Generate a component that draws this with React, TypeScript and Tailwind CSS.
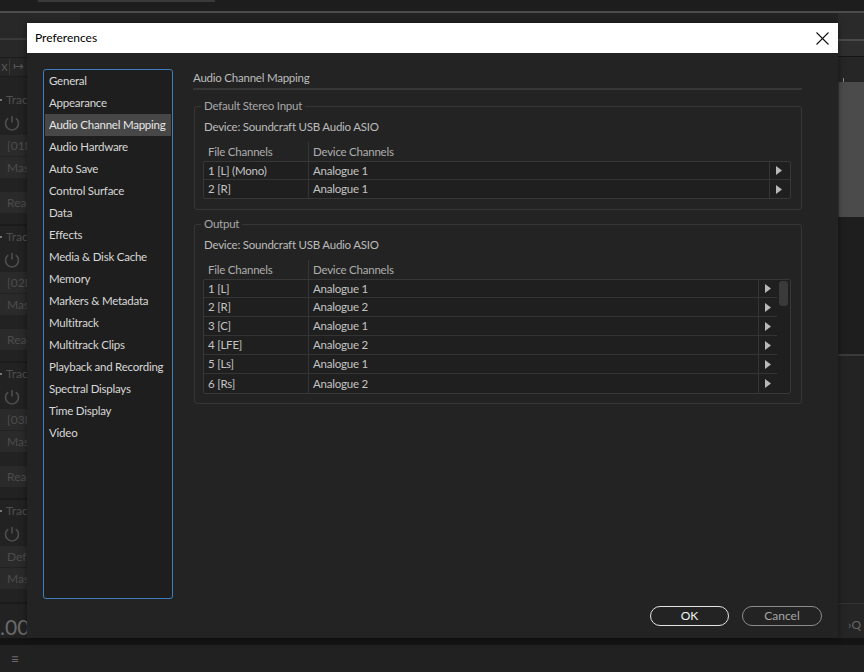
import React from "react";

const navItems = [
  "General",
  "Appearance",
  "Audio Channel Mapping",
  "Audio Hardware",
  "Auto Save",
  "Control Surface",
  "Data",
  "Effects",
  "Media & Disk Cache",
  "Memory",
  "Markers & Metadata",
  "Multitrack",
  "Multitrack Clips",
  "Playback and Recording",
  "Spectral Displays",
  "Time Display",
  "Video",
];

const inputRows = [
  ["1 [L] (Mono)", "Analogue 1"],
  ["2 [R]", "Analogue 1"],
];

const outputRows = [
  ["1 [L]", "Analogue 1"],
  ["2 [R]", "Analogue 2"],
  ["3 [C]", "Analogue 1"],
  ["4 [LFE]", "Analogue 2"],
  ["5 [Ls]", "Analogue 1"],
  ["6 [Rs]", "Analogue 2"],
];

function Arrow() {
  return (
    <svg width="6" height="9" viewBox="0 0 6 9">
      <polygon points="0,0 6,4.5 0,9" fill="#b8b8b8" />
    </svg>
  );
}

function Power() {
  return (
    <svg width="18" height="18" viewBox="0 0 18 18">
      <path d="M5.2 4.2 A6.5 6.5 0 1 0 12.8 4.2" fill="none" stroke="#4e4e4e" strokeWidth="1.6" />
      <line x1="9" y1="2" x2="9" y2="8.5" stroke="#4e4e4e" strokeWidth="1.6" />
    </svg>
  );
}

function Track({ id, last }: { id: string; last?: boolean }) {
  return (
    <div className={`flex flex-col shrink-0 ${last ? "h-[104px]" : "h-[137px]"} border-b-2 border-[#1b1b1b]`}>
      <div className="h-[22px] flex items-center gap-[4px] text-[12px] text-[#4f4f4f]">
        <span className="w-[2px] h-[2px] bg-[#777]" />
        <span>Track</span>
      </div>
      <div className="h-[24px] flex items-center pl-[3px]">
        <Power />
      </div>
      <div className="h-[21px] bg-[#2a2a2a] flex items-center pl-[7px] text-[12px] text-[#4d4d4d]">
        {id}
      </div>
      <div className="h-[1px]" />
      <div className="h-[21px] bg-[#2a2a2a] flex items-center pl-[7px] text-[12px] text-[#4d4d4d]">
        Master
      </div>
      {!last && (
        <>
          <div className="h-[14px]" />
          <div className="h-[21px] bg-[#2a2a2a] flex items-center pl-[7px] text-[12px] text-[#4d4d4d]">
            Read
          </div>
        </>
      )}
    </div>
  );
}

function InputTable() {
  return (
    <div className="border border-[#373737] rounded-[2px] bg-[#1f1f1f]">
      {inputRows.map((r, i) => (
        <div
          key={i}
          className={`flex h-[18px] ${i < inputRows.length - 1 ? "border-b border-[#343434]" : ""}`}
        >
          <div className="w-[105px] border-r border-[#343434] pl-[4px] flex items-center">{r[0]}</div>
          <div className="flex-1 border-r border-[#343434] pl-[4px] flex items-center">{r[1]}</div>
          <div className="w-[20px] flex items-center justify-center pr-[2px]">
            <Arrow />
          </div>
        </div>
      ))}
    </div>
  );
}

function OutputTable() {
  return (
    <div className="border border-[#373737] rounded-[2px] bg-[#1f1f1f] flex">
      <div className="flex-1 flex flex-col">
        {outputRows.map((r, i) => (
          <div
            key={i}
            className={`flex ${i === 0 ? "h-[18px]" : "h-[19px]"} ${i < outputRows.length - 1 ? "border-b border-[#343434]" : ""}`}
          >
            <div className="w-[105px] border-r border-[#343434] pl-[4px] flex items-center">{r[0]}</div>
            <div className="flex-1 border-r border-[#343434] pl-[4px] flex items-center">{r[1]}</div>
            <div className="w-[18px] flex items-center justify-center">
              <Arrow />
            </div>
          </div>
        ))}
      </div>
      <div className="w-[13px] pl-[2px] pt-[1px]">
        <div className="w-[9px] h-[25px] rounded-[3px] bg-[#3a3a3a]" />
      </div>
    </div>
  );
}

function HeaderRow() {
  return (
    <div className="flex h-[19px] text-[#aeaeae]">
      <div className="w-[106px] border-r border-[#363636] pl-[5px] flex items-center">File Channels</div>
      <div className="pl-[4px] flex items-center">Device Channels</div>
    </div>
  );
}

export default function App() {
  return (
    <div className="relative w-[864px] h-[672px] overflow-hidden bg-[#1e1e1e] font-['Lato',sans-serif] flex flex-col">
      {/* top strip */}
      <div className="h-[11px] bg-[#1d1d1d] relative shrink-0">
        <div className="ml-[38px] w-[177px] h-[2px] bg-[#3a3a3a]" />
      </div>
      <div className="h-[2px] bg-[#4c4c4c] shrink-0" />

      {/* middle */}
      <div className="flex-1 flex min-h-0">
        {/* left tracks */}
        <div className="w-[80px] flex flex-col bg-[#222222] overflow-hidden">
          <div className="h-[27px] shrink-0 bg-[#282828] border-b-2 border-[#3a3a3a]" />
          <div className="h-[17px] shrink-0 bg-[#282828]" />
          <div className="h-[20px] shrink-0 flex items-center bg-[#262626] border-y border-[#1c1c1c] text-[13px] text-[#555]">
            <span className="w-[9px] text-center">x</span>
            <span className="w-[1px] h-[16px] bg-[#3a3a3a]" />
            <span className="w-[17px] text-center">↦</span>
            <span className="w-[1px] h-[16px] bg-[#3a3a3a]" />
          </div>
          <div className="h-[12px] shrink-0" />
          <Track id="[01M]" />
          <Track id="[02M]" />
          <Track id="[03M]" />
          <Track id="Default" last />
          <div className="h-[33px] shrink-0 flex items-end text-[21px] leading-[21px] text-[#6a6a6a]">.000</div>
        </div>
        <div className="flex-1 bg-[#232323]" />
        {/* right strip */}
        <div className="w-[26px] flex flex-col">
          <div className="h-[26px] bg-[#2a2a2a]" />
          <div className="h-[2px] bg-[#4a4a4a]" />
          <div className="h-[16px] bg-[#2e2e2e] border-b border-[#161616]" />
          <div className="h-[25px] bg-[#262626] relative">
            <div className="ml-[5px] mt-[21px] w-[1px] h-[4px] bg-[#888]" />
          </div>
          <div className="h-[135px] bg-[#4b4b4b] border-l border-[#3a3a3a]" />
          <div className="h-[137px] bg-[#1e1e1e]" />
          <div className="h-[2px] bg-[#3a3a3a]" />
          <div className="h-[248px] bg-[#232323] border-b border-[#333]" />
          <div className="flex-1 bg-[#252525] pl-[10px] pt-[12px] text-[12px] text-[#666]">›Q</div>
        </div>
      </div>

      {/* bottom */}
      <div className="h-[7px] bg-[#141414] shrink-0" />
      <div className="h-[27px] bg-[#212121] shrink-0 flex items-center pl-[11px] text-[14px] text-[#6a6a6a]">
        ≡
      </div>

      {/* dialog */}
      <div className="absolute left-[27px] top-[23px] w-[811px] h-[615px] flex flex-col bg-[#232323] shadow-[0_0_6px_rgba(0,0,0,0.5)]">
        <div className="h-[30px] bg-white flex items-center justify-between pl-[8px] pr-[9px] shrink-0">
          <span className="text-[12px] text-black">Preferences</span>
          <svg width="13" height="13" viewBox="0 0 13 13">
            <line x1="0.5" y1="0.5" x2="12.5" y2="12.5" stroke="#111" strokeWidth="1.1" />
            <line x1="12.5" y1="0.5" x2="0.5" y2="12.5" stroke="#111" strokeWidth="1.1" />
          </svg>
        </div>

        <div className="flex-1 flex flex-col pt-[16px] pl-[16px] pr-[16px] pb-[13px] text-[11.5px] tracking-[-0.02em]">
          <div className="flex h-[530px]">
            {/* nav */}
            <div className="w-[130px] h-full border border-[#3f7dbf] rounded-[3px] bg-[#1e1e1e] px-px">
              {navItems.map((n) => (
                <div
                  key={n}
                  className={`h-[22px] flex items-center pl-[4px] whitespace-nowrap ${
                    n === "Audio Channel Mapping" ? "bg-[#474747] text-[#e8e8e8]" : "text-[#d8d8d8]"
                  }`}
                >
                  {n}
                </div>
              ))}
            </div>

            {/* content */}
            <div className="ml-[20px] w-[609px] flex flex-col text-[#c4c4c4]">
              <div className="h-[18px] flex items-center text-[#bdbdbd]">Audio Channel Mapping</div>
              <div className="mt-[1px] h-[2px] bg-[#373737]" />

              <fieldset className="mt-[8px] ml-[1px] border border-[#363636] rounded-[3px] px-[6px] pb-[10px] pr-[10px]">
                <legend className="px-[3px] leading-[16px] text-[#a8a8a8]">Default Stereo Input</legend>
                <div className="mt-[5px] h-[16px] flex items-center pl-[3px] text-[#bcbcbc]">
                  Device: Soundcraft USB Audio ASIO
                </div>
                <div className="mt-[7px] ml-[2px]">
                  <HeaderRow />
                  <InputTable />
                </div>
              </fieldset>

              <fieldset className="mt-[6px] ml-[1px] border border-[#363636] rounded-[3px] px-[6px] pb-[9px] pr-[10px]">
                <legend className="px-[3px] leading-[16px] text-[#a8a8a8]">Output</legend>
                <div className="mt-[5px] h-[16px] flex items-center pl-[3px] text-[#bcbcbc]">
                  Device: Soundcraft USB Audio ASIO
                </div>
                <div className="mt-[7px] ml-[2px]">
                  <HeaderRow />
                  <OutputTable />
                </div>
              </fieldset>
            </div>
          </div>

          <div className="mt-[7px] flex justify-end gap-[13px]">
            <button className="w-[79px] h-[20px] rounded-full border-[1.5px] border-[#e4e4e4] text-[12px] tracking-normal text-[#f2f2f2] flex items-center justify-center">
              OK
            </button>
            <button className="w-[80px] h-[20px] rounded-full border-[1.5px] border-[#8c8c8c] text-[12px] tracking-normal text-[#a6a6a6] flex items-center justify-center">
              Cancel
            </button>
          </div>
        </div>
      </div>
    </div>
  );
}
